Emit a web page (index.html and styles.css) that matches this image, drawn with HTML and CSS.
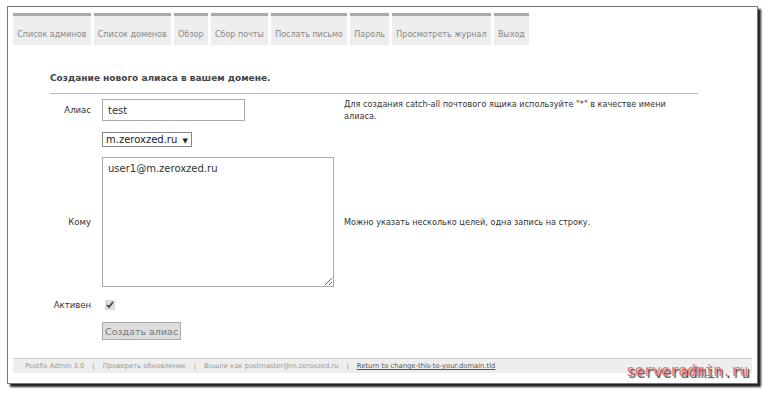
FILE: index.html
```html
<!DOCTYPE html>
<html lang="ru">
<head>
<meta charset="utf-8">
<title>Postfix Admin</title>
<link rel="stylesheet" href="styles.css">
</head>
<body>
<div class="window">
  <nav class="tabs">
    <a class="tab">Список админов</a>
    <a class="tab">Список доменов</a>
    <a class="tab">Обзор</a>
    <a class="tab">Сбор почты</a>
    <a class="tab">Послать письмо</a>
    <a class="tab">Пароль</a>
    <a class="tab">Просмотреть журнал</a>
    <a class="tab">Выход</a>
  </nav>
  <main class="content">
    <h1 class="title">Создание нового алиаса в вашем домене.</h1>
    <div class="form">
      <label class="lbl">Алиас</label>
      <div class="field"><input class="text" type="text" value="test"></div>
      <div class="help">Для создания catch-all почтового ящика используйте "*" в качестве имени алиаса.</div>

      <div class="lbl"></div>
      <div class="field"><div class="select">m.zeroxzed.ru <span class="arrow">▼</span></div></div>
      <div class="help"></div>

      <label class="lbl">Кому</label>
      <div class="field"><textarea class="area">user1@m.zeroxzed.ru</textarea></div>
      <div class="help">Можно указать несколько целей, одна запись на строку.</div>

      <label class="lbl">Активен</label>
      <div class="field field-check"><input class="check" type="checkbox" checked></div>
      <div class="help"></div>

      <div class="lbl"></div>
      <div class="field"><button class="btn">Создать алиас</button></div>
      <div class="help"></div>
    </div>
  </main>
  <footer class="footer">
    <span>Postfix Admin 3.0</span><span class="sep">|</span><span>Проверить обновление</span><span class="sep">|</span><span>Вошли как postmaster@m.zeroxzed.ru</span><span class="sep">|</span><a class="flink">Return to change-this-to-your.domain.tld</a>
  </footer>
</div>
<div class="watermark">serveradmin.ru</div>
</body>
</html>
```
FILE: styles.css
```css
html, body {
  margin: 0;
  padding: 0;
  background: #fff;
}
body {
  width: 768px;
  height: 395px;
  position: relative;
  overflow: hidden;
  font-family: "DejaVu Sans", Verdana, sans-serif;
}
.window {
  margin: 6px 0 0 7px;
  width: 751px;
  height: 378px;
  border: 1px solid #777;
  box-shadow: 3px 3px 2px #222;
  box-sizing: border-box;
  padding: 6px 5px 0 5px;
  display: flex;
  flex-direction: column;
}
.tabs {
  display: flex;
  gap: 3px;
  height: 32px;
}
.tab {
  background: #eee;
  border-top: 3px solid #aaa;
  color: #888;
  font-size: 8px;
  padding: 14px 4.2px 0 4.2px;
  box-sizing: border-box;
  height: 32px;
  white-space: nowrap;
}
.content {
  padding: 28px 0 0 37px;
  flex: 1;
}
.title {
  margin: 0;
  font-size: 9px;
  font-weight: bold;
  color: #444;
  padding-bottom: 10px;
  border-bottom: 1px solid #bbb;
  width: 648px;
}
.form {
  display: grid;
  grid-template-columns: 41px 232px 340px;
  column-gap: 11px;
  margin-top: 4px;
  align-items: center;
}
.form > * {
  margin-bottom: 10px;
}
.lbl {
  text-align: right;
  font-size: 8.5px;
  color: #333;
}
.help {
  font-size: 8.15px;
  color: #333;
  line-height: 12px;
  margin-left: -1px;
}
.field {
  display: flex;
}
.field-check {
  height: 15px;
  align-items: center;
}
.text {
  width: 143px;
  height: 22px;
  box-sizing: border-box;
  border: 1px solid #aaa;
  font-family: "DejaVu Sans", sans-serif;
  font-size: 10px;
  color: #333;
  padding: 0 5px;
  margin: 0;
}
.select {
  width: 90px;
  height: 15px;
  box-sizing: border-box;
  border: 1px solid #888;
  font-size: 10px;
  color: #222;
  padding: 0 3px;
  line-height: 13px;
  white-space: nowrap;
}
.arrow {
  font-size: 7px;
  margin-left: 2px;
}
.area {
  width: 232px;
  height: 130px;
  box-sizing: border-box;
  border: 1px solid #aaa;
  font-family: "DejaVu Sans", sans-serif;
  font-size: 10px;
  color: #333;
  padding: 5px 5px;
  margin: 0;
  resize: both;
}
.check {
  width: 10px;
  height: 10px;
  margin: 0 0 0 3px;
  accent-color: #ddd;
}
.btn {
  height: 18px;
  border: 1px solid #aaa;
  background: #ddd;
  color: #777;
  font-family: "DejaVu Sans", sans-serif;
  font-size: 9.5px;
  padding: 0 2px;
  margin: 0;
  white-space: nowrap;
}
.footer {
  margin-bottom: 10px;
  height: 15px;
  background: #eee;
  border-top: 1px solid #ccc;
  font-size: 6.8px;
  color: #999;
  padding: 3px 0 0 12px;
  box-sizing: border-box;
  white-space: nowrap;
}
.sep {
  margin: 0 8px;
}
.flink {
  color: #555;
  text-decoration: underline;
}
.watermark {
  position: absolute;
  left: 626px;
  top: 362px;
  font-family: "DejaVu Sans Mono", monospace;
  font-size: 15px;
  color: #f07272;
  text-shadow: 2px 2px 1px #444;
  letter-spacing: -0.3px;
}
```
